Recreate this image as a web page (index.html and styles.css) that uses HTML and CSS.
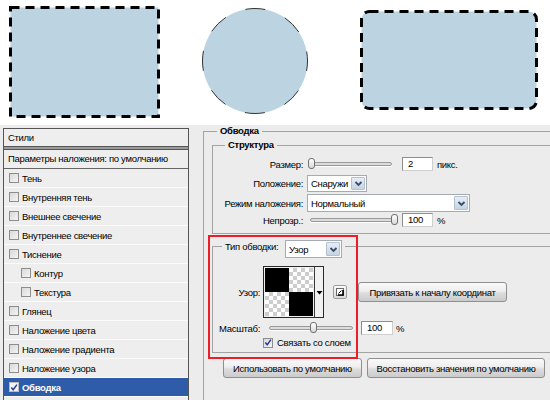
FILE: index.html
```html
<!DOCTYPE html>
<html lang="ru">
<head>
<meta charset="utf-8">
<title>Обводка</title>
<link rel="stylesheet" href="styles.css">
</head>
<body>
<div class="canvas">
  <svg class="shapes" width="550" height="125" viewBox="0 0 550 125">
    <rect x="10.5" y="7.5" width="148" height="109" fill="#bcd4e2" stroke="#000" stroke-width="3" stroke-dasharray="9 6"/>
    <circle cx="255" cy="61" r="52.5" fill="#bcd4e2" stroke="#333" stroke-width="1" stroke-dasharray="20 21.23" stroke-dashoffset="10"/>
    <rect x="361.5" y="11.5" width="175" height="97" rx="8" fill="#bcd4e2" stroke="#000" stroke-width="3" stroke-dasharray="9 6"/>
  </svg>
</div>
<div class="dialog">
  <div class="styles-panel">
    <div class="sp-head">Стили</div>
    <div class="sp-sep"></div>
    <div class="sp-blend">Параметры наложения: по умолчанию</div>
    <div class="sp-item"><span class="cb"></span>Тень</div>
    <div class="sp-item"><span class="cb"></span>Внутренняя тень</div>
    <div class="sp-item"><span class="cb"></span>Внешнее свечение</div>
    <div class="sp-item"><span class="cb"></span>Внутреннее свечение</div>
    <div class="sp-item"><span class="cb"></span>Тиснение</div>
    <div class="sp-item sub"><span class="cb"></span>Контур</div>
    <div class="sp-item sub"><span class="cb"></span>Текстура</div>
    <div class="sp-item"><span class="cb"></span>Глянец</div>
    <div class="sp-item"><span class="cb"></span>Наложение цвета</div>
    <div class="sp-item"><span class="cb"></span>Наложение градиента</div>
    <div class="sp-item"><span class="cb"></span>Наложение узора</div>
    <div class="sp-item selected"><span class="cb"><svg width="9" height="9" viewBox="0 0 9 9"><path d="M1.5 4.5 L3.6 7 L7.8 1.2" fill="none" stroke="#24379c" stroke-width="1.6"/></svg></span>Обводка</div>
    <div class="sp-item"></div>
  </div>

  <fieldset class="group outer">
    <legend class="lg-outer">Обводка</legend>

    <fieldset class="group inner structure">
      <legend class="lg-struct">Структура</legend>
      <div class="srow r-size">
        <span class="lbl">Размер:</span>
        <div class="ctl">
          <div class="slider s-size"><div class="track"></div><div class="thumb"></div></div>
          <span class="input">2</span>
          <span class="unit">пикс.</span>
        </div>
      </div>
      <div class="srow r-pos">
        <span class="lbl">Положение:</span>
        <div class="ctl">
          <div class="select sel-pos"><span class="sel-text">Снаружи</span><span class="drop"><svg width="11" height="11" viewBox="0 0 11 11"><path d="M2.5 4 L5.5 7 L8.5 4" fill="none" stroke="#3b4d6e" stroke-width="1.8"/></svg></span></div>
        </div>
      </div>
      <div class="srow r-mode">
        <span class="lbl">Режим наложения:</span>
        <div class="ctl">
          <div class="select sel-mode"><span class="sel-text">Нормальный</span><span class="drop"><svg width="11" height="11" viewBox="0 0 11 11"><path d="M2.5 4 L5.5 7 L8.5 4" fill="none" stroke="#3b4d6e" stroke-width="1.8"/></svg></span></div>
        </div>
      </div>
      <div class="srow r-opac">
        <span class="lbl">Непрозр.:</span>
        <div class="ctl">
          <div class="slider s-opac"><div class="track"></div><div class="thumb"></div></div>
          <span class="input">100</span>
          <span class="unit">%</span>
        </div>
      </div>
    </fieldset>

    <fieldset class="group inner filltype">
      <legend class="lg-type"><span class="legend-row"><span class="lg-label">Тип обводки:</span><span class="select sel-type"><span class="sel-text">Узор</span><span class="drop"><svg width="11" height="11" viewBox="0 0 11 11"><path d="M2.5 4 L5.5 7 L8.5 4" fill="none" stroke="#3b4d6e" stroke-width="1.8"/></svg></span></span></span></legend>
      <div class="trow r-pattern">
        <span class="lbl">Узор:</span>
        <div class="ctl">
          <div class="pattern">
            <div class="preview">
              <span class="sq black"></span><span class="sq check"></span>
              <span class="sq check"></span><span class="sq black"></span>
            </div>
            <div class="pat-arrow"><svg width="7" height="5" viewBox="0 0 7 5"><path d="M0.5 1 H6.5 L3.5 4.5 Z" fill="#000"/></svg></div>
          </div>
          <span class="icon-btn"><svg width="10" height="10" viewBox="0 0 10 10"><rect x="1.5" y="1.5" width="7" height="7" fill="#fff" stroke="#6a6a6a"/><path d="M3 8 H8 V3" fill="none" stroke="#000" stroke-width="1.6"/><path d="M3.5 6.5 L6.5 3.5" stroke="#000" stroke-width="1"/></svg></span>
          <span class="btn btn-snap">Привязать к началу координат</span>
        </div>
      </div>
      <div class="trow r-scale">
        <span class="lbl">Масштаб:</span>
        <div class="ctl">
          <div class="slider s-scale"><div class="track"></div><div class="thumb"></div></div>
          <span class="input">100</span>
          <span class="unit">%</span>
        </div>
      </div>
      <div class="trow r-link">
        <span class="lbl"></span>
        <div class="ctl">
          <span class="cb"><svg width="9" height="9" viewBox="0 0 9 9"><path d="M1.5 4.5 L3.6 7 L7.8 1.2" fill="none" stroke="#24379c" stroke-width="1.6"/></svg></span>
          <span class="cb-text">Связать со слоем</span>
        </div>
      </div>
    </fieldset>

    <div class="btn-row">
      <span class="btn btn-default">Использовать по умолчанию</span>
      <span class="btn btn-reset">Восстановить значения по умолчанию</span>
    </div>
  </fieldset>

  <div class="highlight"></div>
</div>
</body>
</html>
```

FILE: styles.css
```css
* { box-sizing: border-box; }
html, body { margin: 0; padding: 0; }
body {
  width: 550px;
  height: 400px;
  overflow: hidden;
  background: #fff;
  font-family: "Liberation Sans", Arial, sans-serif;
  font-size: 9.5px;
  letter-spacing: -0.3px;
  color: #000;
}
.canvas { height: 125px; background: #fff; }
.shapes { display: block; }

.dialog {
  position: relative;
  height: 275px;
  background: #ececec;
  display: flex;
  align-items: flex-start;
  overflow: hidden;
}

/* styles list */
.styles-panel {
  flex: none;
  width: 186px;
  height: 300px;
  margin: 3px 0 0 3px;
  border: 1px solid #555;
  border-bottom: none;
  background: #eeeeee;
}
.sp-head {
  height: 18px;
  line-height: 17px;
  padding-left: 4px;
  border-bottom: 1px solid #555;
}
.sp-sep {
  height: 3px;
  background: #9c9c9c;
  border-bottom: 1px solid #555;
}
.sp-blend {
  height: 19px;
  line-height: 18px;
  padding-left: 4px;
  border-bottom: 1px solid #666;
}
.sp-item {
  height: 19px;
  display: flex;
  align-items: center;
  padding-left: 5px;
  border-bottom: 1px solid #fbfbfb;
}
.sp-item.sub { padding-left: 17px; }
.sp-item .cb { margin-right: 3px; }
.sp-item.selected {
  background: #2f5ca8;
  color: #fff;
  font-weight: bold;
}

.cb {
  flex: none;
  width: 10px;
  height: 10px;
  border: 1px solid #8d8d8d;
  background: linear-gradient(135deg, #d9d9d9, #f4f4f4);
  display: inline-flex;
  align-items: center;
  justify-content: center;
}
.selected .cb { background: #f2f2f2; border-color: #bbb; }

/* fieldsets */
.group {
  margin: 0;
  padding: 0;
  min-width: 0;
  border: 1px solid #a3a3a3;
}
.group legend {
  padding: 0 3px;
  font-weight: bold;
  line-height: 12px;
}
.outer {
  flex: none;
  width: 400px;
  height: 300px;
  margin-left: 14px;
}
.lg-outer { margin-left: 13px; }
.inner {
  width: 400px;
  margin-left: 8px;
}
.structure {
  margin-top: 2px;
  padding: 6px 0 6px 0;
}
.lg-struct { margin-left: 12px; }

.srow {
  display: grid;
  grid-template-columns: 90px auto;
  column-gap: 4px;
  align-items: center;
}
.lbl { text-align: right; white-space: nowrap; }
.ctl { display: flex; align-items: center; }
.r-size { height: 14px; }
.r-pos { height: 17px; margin-top: 4px; }
.r-mode { height: 18px; margin-top: 2px; }
.r-opac { height: 14px; margin-top: 1px; }

/* slider */
.slider { position: relative; height: 12px; flex: none; }
.slider .track {
  position: absolute;
  left: 2px;
  right: 3px;
  top: 4px;
  height: 4px;
  border: 1px solid #9a9a9a;
  border-radius: 2px;
  background: #dcdcdc;
  box-shadow: 0 1px 0 #fff;
}
.slider .thumb {
  position: absolute;
  top: 0;
  width: 7px;
  height: 11px;
  border: 1px solid #6f6f6f;
  border-radius: 3px;
  background: linear-gradient(#ffffff, #d8d8d8);
}
.s-size { width: 88px; margin-right: 7px; }
.s-size .thumb { left: 1px; }
.s-opac { width: 91px; margin-right: 4px; }
.s-opac .track { left: 3px; right: 3px; }
.s-opac .thumb { right: 0; }
.s-scale { width: 89px; margin-left: 4px; margin-right: 5px; }
.s-scale .thumb { left: 43px; }

.input {
  flex: none;
  width: 31px;
  height: 14px;
  line-height: 12px;
  padding-left: 5px;
  background: #fff;
  border: 1px solid #8e8e8e;
  border-right-color: #cfcfcf;
  border-bottom-color: #cfcfcf;
}
.unit { margin-left: 4px; }

/* select */
.select {
  display: flex;
  align-items: stretch;
  background: #fff;
  border: 1px solid #a6abb1;
  flex: none;
}
.sel-text { flex: 1; padding-left: 3px; display: flex; align-items: center; font-weight: normal; white-space: nowrap; overflow: hidden; }
.drop {
  flex: none;
  width: 14px;
  margin: 1px;
  border: 1px solid #b3c1d0;
  border-radius: 1px;
  background: linear-gradient(#e8eef5, #c6d3e1);
  display: flex;
  align-items: center;
  justify-content: center;
}
.sel-pos { width: 60px; height: 17px; }
.sel-mode { width: 163px; height: 18px; }
.sel-type { width: 57px; height: 18px; margin-left: 2px; margin-bottom: -5px; }

/* stroke type */
.filltype {
  margin-top: 6px;
  padding: 0 0 4px 0;
}
.lg-type { margin-left: 9px; }
.legend-row { display: flex; align-items: flex-start; font-weight: normal; line-height: 13px; }
.lg-label { white-space: nowrap; width: 58px; }

.trow {
  display: grid;
  grid-template-columns: 47px auto;
  column-gap: 3px;
  align-items: center;
}
.r-pattern { height: 52px; margin-top: 13px; }
.r-scale { height: 14px; margin-top: 3px; }
.r-link { height: 11px; margin-top: 2px; }
.r-scale .input { width: 32px; }
.r-scale .unit { margin-left: 3px; }
.cb-text { margin-left: 4px; }

.pattern {
  flex: none;
  width: 61px;
  height: 52px;
  border: 1px solid #2a2a2a;
  background: #f1f1f1;
  display: flex;
  margin-right: 9px;
}
.preview {
  width: 51px;
  padding: 1px;
  display: grid;
  grid-template-columns: 24px 24px;
  grid-template-rows: 24px 24px;
  border-right: 1px solid #3a3a3a;
}
.sq.black { background: #000; }
.sq.check {
  background: repeating-conic-gradient(#cdcdcd 0 25%, #ffffff 0 50%) 0 0 / 8px 8px;
}
.pat-arrow {
  flex: 1;
  display: flex;
  align-items: center;
  justify-content: center;
}
.icon-btn {
  flex: none;
  width: 14px;
  height: 14px;
  border: 1px solid #9c9c9c;
  border-radius: 2px;
  background: linear-gradient(#fafafa, #dadada);
  display: flex;
  align-items: center;
  justify-content: center;
  margin-right: 11px;
}

/* buttons */
.btn {
  flex: none;
  display: flex;
  align-items: center;
  justify-content: center;
  height: 20px;
  border: 1px solid #8f8f8f;
  border-radius: 3px;
  background: linear-gradient(#f9f9f9 0%, #eeeeee 45%, #dddddd 55%, #cbcbcb 100%);
  white-space: nowrap;
}
.btn-snap { width: 149px; }
.btn-row {
  display: flex;
  gap: 5px;
  margin: 5px 0 0 19px;
}
.btn-default { width: 139px; }
.btn-reset { width: 178px; }

.highlight {
  position: absolute;
  left: 208px;
  top: 110px;
  width: 150px;
  height: 124px;
  border: 2px solid #ee1c24;
}
```
